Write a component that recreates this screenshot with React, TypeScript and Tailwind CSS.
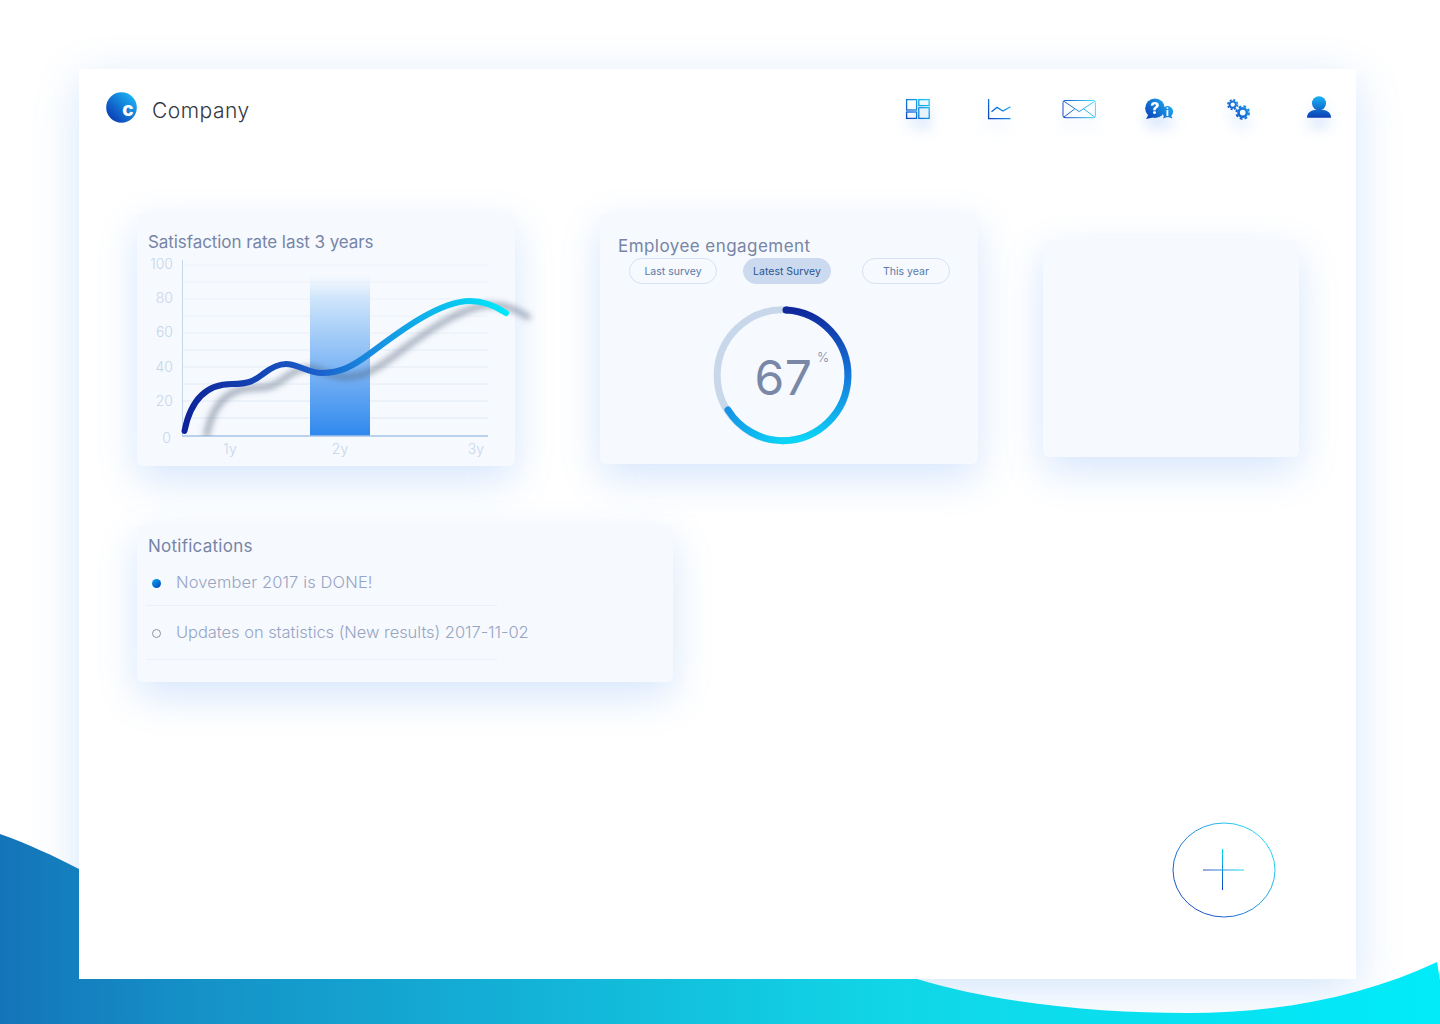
const GRID_LINES = [265, 282, 299, 316, 333, 350, 367, 384, 401, 418]

const Y_LABELS = [
  { label: '100', y: 269, x: 173 },
  { label: '80', y: 303, x: 173 },
  { label: '60', y: 337, x: 173 },
  { label: '40', y: 372, x: 173 },
  { label: '20', y: 406, x: 173 },
  { label: '0', y: 443, x: 171 },
]

const X_LABELS = [
  { label: '1y', x: 230 },
  { label: '2y', x: 340 },
  { label: '3y', x: 476 },
]

const CURVE =
  'M184.5 431 C189 408 200 384 232 384 C250 384 255 380 263 374 C272 367 278 364 286 364 C298 364 308 373 322 373 C340 373 352 367 372 352 C400 331 440 301 470 301 C485 301 497 307 506 313'

const CARD_SHADOW = 'shadow-[0_14px_40px_rgba(50,130,240,0.2)]'

function Gradient({ id, x1, y1, x2, y2, from, to }: { id: string; x1: number; y1: number; x2: number; y2: number; from: string; to: string }) {
  return (
    <linearGradient id={id} gradientUnits="userSpaceOnUse" x1={x1} y1={y1} x2={x2} y2={y2}>
      <stop offset="0" stopColor={from} />
      <stop offset="1" stopColor={to} />
    </linearGradient>
  )
}

function Background() {
  return (
    <svg className="absolute inset-0 z-[1]" width="1440" height="1024" viewBox="0 0 1440 1024">
      <defs>
        <linearGradient id="wave" gradientUnits="userSpaceOnUse" x1="0" y1="1000" x2="1440" y2="1000">
          <stop offset="0" stopColor="#1474b9" />
          <stop offset="0.14" stopColor="#1592c8" />
          <stop offset="0.62" stopColor="#11d6e7" />
          <stop offset="1" stopColor="#00ebf9" />
        </linearGradient>
      </defs>
      <path
        d="M0 834 C28 844 54 856 79 869 L79 979 L917 979 C1000 1004 1100 1013 1187 1013 C1280 1013 1365 996 1437 962 L1440 980 L1440 1024 L0 1024 Z"
        fill="url(#wave)"
      />
    </svg>
  )
}

function DashboardIcon() {
  return (
    <svg width="32" height="32" viewBox="0 0 32 32" fill="none">
      <defs>
        <Gradient id="ic1" x1={3} y1={26} x2={27} y2={6} from="#0f3fc0" to="#18d8fa" />
      </defs>
      <g stroke="url(#ic1)" strokeWidth="1.3">
        <rect x="3.6" y="6.6" width="10" height="10.4" />
        <rect x="3.6" y="19" width="10" height="6.4" />
        <rect x="15.8" y="6.6" width="10.4" height="6" fill="#f1f7fe" />
        <rect x="15.8" y="14.7" width="10.4" height="10.7" fill="#e8f2fd" />
      </g>
    </svg>
  )
}

function ChartIcon() {
  return (
    <svg width="32" height="32" viewBox="0 0 32 32" fill="none">
      <defs>
        <Gradient id="ic2" x1={5} y1={26} x2={28} y2={10} from="#0f3fc0" to="#1fb4f5" />
      </defs>
      <path d="M5.6 6 V25.6 H27.5" stroke="url(#ic2)" strokeWidth="1.3" />
      <path d="M8.5 18.8 L14 14.4 L20 18 L27.5 13.8" stroke="url(#ic2)" strokeWidth="1.3" />
    </svg>
  )
}

function MailIcon() {
  return (
    <svg width="36" height="32" viewBox="0 0 36 32" fill="none">
      <defs>
        <Gradient id="ic3" x1={1} y1={20} x2={35} y2={12} from="#1746c4" to="#3fe6fb" />
      </defs>
      <g stroke="url(#ic3)" strokeWidth="1">
        <rect x="2" y="7.5" width="32.4" height="17.2" rx="2" />
        <path d="M2.8 8.2 L18.2 18.6 L33.8 8.2" />
        <path d="M2.8 24.2 L13.8 15.8 M33.8 24.2 L22.6 15.8" />
      </g>
    </svg>
  )
}

function ChatIcon() {
  return (
    <svg width="34" height="32" viewBox="0 0 34 32" fill="none">
      <defs>
        <Gradient id="ic4" x1={4} y1={26} x2={26} y2={6} from="#0b3cb6" to="#1cb0f2" />
      </defs>
      <g fill="url(#ic4)">
        <circle cx="13" cy="15.2" r="9.8" />
        <path d="M4 26 L7.5 20 L11 24.5 Z" />
        <circle cx="25.5" cy="18.6" r="5.6" />
        <path d="M21 25.6 L22.5 21 L25 24 Z M30.5 25.6 L28.5 21 L26 24 Z" />
      </g>
      <text x="13" y="21" textAnchor="middle" fontSize="16" fontWeight="800" fill="#ffffff">?</text>
      <text x="25.5" y="22.6" textAnchor="middle" fontSize="10" fontWeight="800" fill="#ffffff">i</text>
    </svg>
  )
}

function GearsIcon() {
  return (
    <svg width="32" height="32" viewBox="0 0 32 32" fill="none">
      <defs>
        <Gradient id="ic5" x1={5} y1={26} x2={26} y2={6} from="#0f3fc0" to="#1aa6f0" />
      </defs>
      <g stroke="url(#ic5)">
        <circle cx="9.7" cy="11.6" r="3.2" strokeWidth="2" />
        <circle cx="9.7" cy="11.6" r="4.8" strokeWidth="1.6" strokeDasharray="2.1 1.67" />
        <circle cx="19.7" cy="19.6" r="4.2" strokeWidth="2.6" />
        <circle cx="19.7" cy="19.6" r="6.3" strokeWidth="2" strokeDasharray="2.75 2.2" />
      </g>
    </svg>
  )
}

function UserIcon() {
  return (
    <svg width="32" height="32" viewBox="0 0 32 32" fill="none">
      <defs>
        <Gradient id="ic6" x1={16} y1={3} x2={16} y2={25} from="#18b4f5" to="#0c3db4" />
      </defs>
      <circle cx="16" cy="10.3" r="7" fill="url(#ic6)" />
      <path d="M4 24.8 C4 19 9 16.6 16 16.6 C23 16.6 28 19 28 24.8 Z" fill="url(#ic6)" />
    </svg>
  )
}

const NAV_ICONS = [DashboardIcon, ChartIcon, MailIcon, ChatIcon, GearsIcon, UserIcon]

function Header() {
  return (
    <header className="flex h-[80px] items-center pl-[27px]">
      <svg className="mb-[3px]" width="31" height="31" viewBox="0 0 31 31">
        <defs>
          <Gradient id="logo" x1={4} y1={28} x2={28} y2={4} from="#0b3ab2" to="#1ab4f6" />
        </defs>
        <circle cx="15.5" cy="15.5" r="15.3" fill="url(#logo)" />
        <text x="22" y="24" textAnchor="middle" fontSize="19" fontWeight="800" fill="#ffffff">c</text>
      </svg>
      <span className="ml-[15px] mt-[3px] text-[21px] font-light tracking-[0.5px] text-[#33383f]">Company</span>
      <nav className="-mr-[3px] ml-auto flex">
        {NAV_ICONS.map((Icon, i) => (
          <div key={i} className="flex w-20 justify-center drop-shadow-[0_10px_7px_rgba(50,130,240,0.2)]">
            <Icon />
          </div>
        ))}
      </nav>
    </header>
  )
}

function SatisfactionCard() {
  return (
    <section className={`h-[253px] w-[378px] rounded-md bg-[#f6f9fe] pl-[11px] pt-[18px] ${CARD_SHADOW}`}>
      <h2 className="text-[17px] leading-[22px] font-normal tracking-[-0.07px] text-[#7685a6]">Satisfaction rate last 3 years</h2>
      <svg className="-ml-[11px] mt-[2px] block overflow-visible" width="378" height="211" viewBox="137 255 378 211">
        <defs>
          <linearGradient id="bar" x1="0" y1="0" x2="0" y2="1">
            <stop offset="0" stopColor="#d9ebfb" stopOpacity="0" />
            <stop offset="0.14" stopColor="#cfe5fb" />
            <stop offset="1" stopColor="#2f88ee" />
          </linearGradient>
          <linearGradient id="curve" gradientUnits="userSpaceOnUse" x1="184" y1="0" x2="506" y2="0">
            <stop offset="0" stopColor="#0e2498" />
            <stop offset="0.42" stopColor="#1b60cc" />
            <stop offset="0.62" stopColor="#1696e4" />
            <stop offset="1" stopColor="#00e9f9" />
          </linearGradient>
          <filter id="curveBlur" x="-10%" y="-20%" width="120%" height="140%">
            <feGaussianBlur stdDeviation="3" />
          </filter>
          <clipPath id="aboveAxis">
            <rect x="137" y="255" width="420" height="181" />
          </clipPath>
        </defs>
        {GRID_LINES.map((y, i) => (
          <line key={y} x1="183" x2="488" y1={y} y2={y} stroke="#dfe8f4" opacity={0.25 + i * 0.08} />
        ))}
        <rect x="310" y="275" width="60" height="161" fill="url(#bar)" />
        <line x1="182.5" x2="182.5" y1="260" y2="436" stroke="#c3d6ec" />
        <line x1="182" x2="488" y1="436" y2="436" stroke="#a6c3e4" strokeWidth="1.5" />
        <g clipPath="url(#aboveAxis)">
          <path
            d={CURVE}
            transform="translate(22 4)"
            fill="none"
            stroke="#4f5f78"
            strokeOpacity="0.6"
            strokeWidth="5"
            strokeLinecap="round"
            filter="url(#curveBlur)"
          />
        </g>
        <path d={CURVE} fill="none" stroke="url(#curve)" strokeWidth="6" strokeLinecap="round" />
        <g fontSize="14" fill="#c6d6ea" fontWeight="300">
          {Y_LABELS.map((l) => (
            <text key={l.label} x={l.x} y={l.y} textAnchor="end">{l.label}</text>
          ))}
          {X_LABELS.map((l) => (
            <text key={l.label} x={l.x} y="454" textAnchor="middle">{l.label}</text>
          ))}
        </g>
      </svg>
    </section>
  )
}

function Pill({ label, active, className }: { label: string; active?: boolean; className?: string }) {
  return (
    <button
      className={`h-[26px] w-[88px] rounded-full border pt-px text-[10.5px] ${
        active ? 'border-[#cbdaee] bg-[#cbdaee] text-[#2b5590]' : 'border-[#d5e2f3] text-[#5a79a8]'
      } ${className ?? ''}`}
    >
      {label}
    </button>
  )
}

function EngagementCard() {
  return (
    <section className={`h-[251px] w-[378px] rounded-md bg-[#f6f9fe] pl-[18px] pt-[22px] ${CARD_SHADOW}`}>
      <h2 className="text-[17px] leading-[22px] font-normal tracking-[0.45px] text-[#7685a6]">Employee engagement</h2>
      <div className="ml-[11px] mt-[1px] flex">
        <Pill label="Last survey" />
        <Pill label="Latest Survey" active className="ml-[26px]" />
        <Pill label="This year" className="ml-[31px]" />
      </div>
      <svg className="-ml-[18px] mt-[16px] block" width="378" height="150" viewBox="600 300 378 150">
        <defs>
          <linearGradient id="ringA" gradientUnits="userSpaceOnUse" x1="783" y1="310" x2="783" y2="441">
            <stop offset="0" stopColor="#10289c" />
            <stop offset="0.5" stopColor="#1678dc" />
            <stop offset="1" stopColor="#0bd5f6" />
          </linearGradient>
          <Gradient id="ringB" x1={783} y1={441} x2={728} y2={410} from="#0bd5f6" to="#1592e6" />
        </defs>
        <circle cx="782.7" cy="375.3" r="65.5" fill="none" stroke="#c8d8ea" strokeWidth="7" />
        <path d="M728 410 A65.5 65.5 0 0 0 782.7 440.8" fill="none" stroke="url(#ringB)" strokeWidth="7" strokeLinecap="round" />
        <path d="M786 309.9 A65.5 65.5 0 0 1 782.7 440.8" fill="none" stroke="url(#ringA)" strokeWidth="7" />
        <path d="M786 309.9 L786 309.9" stroke="#10289c" strokeWidth="7" strokeLinecap="round" />
        <text x="783.5" y="395" textAnchor="middle" fontSize="48" fill="#7a88a8" letterSpacing="0.5">67</text>
        <text x="823" y="362" textAnchor="middle" fontSize="13" fontWeight="300" fill="#7f8cab">%</text>
      </svg>
    </section>
  )
}

function NotificationsCard() {
  return (
    <section className={`w-[536px] rounded-md bg-[#f6f9fe] pb-[22px] pl-[9px] pt-[10px] ${CARD_SHADOW}`}>
      <h2 className="ml-[2px] text-[17px] leading-[22px] font-normal tracking-[0.25px] text-[#7685a6]">Notifications</h2>
      <ul className="w-[351px]">
        <li className="flex items-center border-b border-[#edf1f7] pb-[12px] pl-[6px] pt-[14px] text-[16.5px] leading-[22px] font-light tracking-[0.12px] whitespace-nowrap text-[#98a5c2]">
          <span className="mr-[15px] mt-[2px] size-[9px] shrink-0 rounded-full bg-gradient-to-br from-[#18a8f2] to-[#0c3eb6]" />
          November 2017 is DONE!
        </li>
        <li className="flex items-center border-b border-[#edf1f7] pb-[16px] pl-[6px] pt-[15px] text-[16.5px] leading-[22px] font-light tracking-[-0.05px] whitespace-nowrap text-[#98a5c2]">
          <span className="mr-[15px] mt-[3px] size-[9px] shrink-0 rounded-full border border-[#8f969f]" />
          Updates on statistics (New results) 2017-11-02
        </li>
      </ul>
    </section>
  )
}

function AddButton() {
  return (
    <button className="absolute bottom-[61px] right-[80px]" aria-label="Add">
      <svg className="block" width="104" height="96" viewBox="0 0 104 96" fill="none">
        <defs>
          <Gradient id="fabRing" x1={8} y1={88} x2={96} y2={8} from="#1a3fc4" to="#28e6fb" />
          <Gradient id="fabH" x1={31} y1={48} x2={72} y2={48} from="#7f88d2" to="#63ecfc" />
          <Gradient id="fabV" x1={50} y1={27} x2={50} y2={68} from="#07e0f8" to="#0c3fc4" />
        </defs>
        <ellipse cx="52" cy="48" rx="51" ry="47" stroke="url(#fabRing)" />
        <line x1="31" x2="72" y1="48" y2="48" stroke="url(#fabH)" strokeWidth="1.4" />
        <line x1="50.5" x2="50.5" y1="27" y2="68" stroke="url(#fabV)" />
      </svg>
    </button>
  )
}

export default function App() {
  return (
    <div className="relative h-[1024px] w-[1440px] overflow-hidden bg-white font-[Inter,sans-serif]">
      {/* Shadow sits under the wave, the panel on top of it */}
      <div className="absolute left-[79px] top-[69px] z-0 h-[910px] w-[1277px] shadow-[0_12px_44px_rgba(40,130,235,0.2)]" />
      <Background />
      <main className="relative z-[2] ml-[79px] mt-[69px] h-[910px] w-[1277px] bg-white">
        <Header />
        <div className="ml-[58px] mt-[64px] flex items-start">
          <SatisfactionCard />
          <div className="ml-[85px]">
            <EngagementCard />
          </div>
          <div className={`ml-[65px] mt-[27px] h-[217px] w-[256px] rounded-md bg-[#f6f9fe] ${CARD_SHADOW}`} />
        </div>
        <div className="ml-[58px] mt-[59px]">
          <NotificationsCard />
        </div>
        <AddButton />
      </main>
    </div>
  )
}
